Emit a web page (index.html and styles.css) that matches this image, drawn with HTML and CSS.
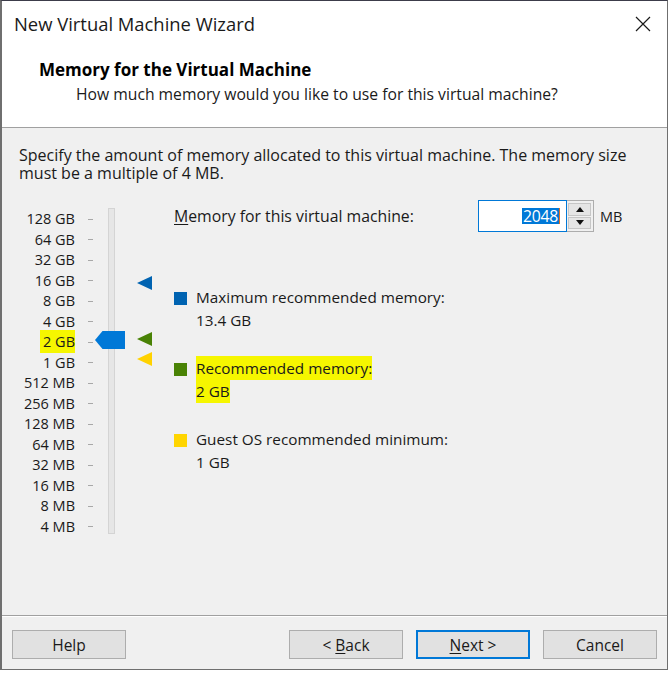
FILE: index.html
```html
<!DOCTYPE html>
<html>
<head>
<meta charset="utf-8">
<link rel="stylesheet" href="styles.css">
</head>
<body>
<div class="window">
  <div class="titlebar">
    <span class="title">New Virtual Machine Wizard</span>
    <svg class="close" width="16" height="16" viewBox="0 0 16 16"><path d="M1 1 L15 15 M15 1 L1 15" stroke="#1a1a1a" stroke-width="1.2" fill="none"/></svg>
  </div>
  <div class="header">
    <div class="h-title">Memory for the Virtual Machine</div>
    <div class="h-sub">How much memory would you like to use for this virtual machine?</div>
  </div>
  <div class="body">
    <p class="intro">Specify the amount of memory allocated to this virtual machine. The memory size must be a multiple of 4 MB.</p>
    <div class="main">
      <div class="scale">
        <div class="labels">
          <div class="row"><span class="lbl">128 GB</span><span class="tick"></span></div>
          <div class="row"><span class="lbl">64 GB</span><span class="tick"></span></div>
          <div class="row"><span class="lbl">32 GB</span><span class="tick"></span></div>
          <div class="row"><span class="lbl">16 GB</span><span class="tick"></span></div>
          <div class="row"><span class="lbl">8 GB</span><span class="tick"></span></div>
          <div class="row"><span class="lbl">4 GB</span><span class="tick"></span></div>
          <div class="row"><span class="lbl"><span class="hl-label">2 GB</span></span><span class="tick"></span></div>
          <div class="row"><span class="lbl">1 GB</span><span class="tick"></span></div>
          <div class="row"><span class="lbl">512 MB</span><span class="tick"></span></div>
          <div class="row"><span class="lbl">256 MB</span><span class="tick"></span></div>
          <div class="row"><span class="lbl">128 MB</span><span class="tick"></span></div>
          <div class="row"><span class="lbl">64 MB</span><span class="tick"></span></div>
          <div class="row"><span class="lbl">32 MB</span><span class="tick"></span></div>
          <div class="row"><span class="lbl">16 MB</span><span class="tick"></span></div>
          <div class="row"><span class="lbl">8 MB</span><span class="tick"></span></div>
          <div class="row"><span class="lbl">4 MB</span><span class="tick"></span></div>
        </div>
        <div class="track"></div>
        <div class="thumb"></div>
        <div class="tri tri-max"></div>
        <div class="tri tri-rec"></div>
        <div class="tri tri-min"></div>
      </div>
      <div class="panel">
        <div class="mem-row">
          <span class="mem-label"><u>M</u>emory for this virtual machine:</span>
          <div class="input"><span class="sel">2048</span><span class="caret"></span></div>
          <div class="spin">
            <div class="spin-btn"><span class="arr-up"></span></div>
            <div class="spin-btn"><span class="arr-down"></span></div>
          </div>
          <span class="unit">MB</span>
        </div>
        <div class="legend">
          <div class="item">
            <span class="sq sq-max"></span>
            <div class="item-text"><div>Maximum recommended memory:</div><div>13.4 GB</div></div>
          </div>
          <div class="item">
            <span class="sq sq-rec"></span>
            <div class="item-text"><div><span class="hl">Recommended memory:</span></div><div><span class="hl">2 GB</span></div></div>
          </div>
          <div class="item">
            <span class="sq sq-min"></span>
            <div class="item-text"><div>Guest OS recommended minimum:</div><div>1 GB</div></div>
          </div>
        </div>
      </div>
    </div>
  </div>
  <div class="footer">
    <button class="btn">Help</button>
    <span class="spacer"></span>
    <button class="btn">&lt; <u>B</u>ack</button>
    <button class="btn btn-default"><u>N</u>ext &gt;</button>
    <button class="btn">Cancel</button>
  </div>
</div>
</body>
</html>
```

FILE: styles.css
```css
* { box-sizing: border-box; }
html, body { margin: 0; padding: 0; background: #ffffff; }
body { font-family: "Open Sans", "Noto Sans", sans-serif; font-size: 15.8px; color: #1a1a1a; }

.window {
  width: 668px;
  border: 1px solid #6f6f6f;
  border-left: 2px solid #6f6f6f;
  border-top: 1px solid #3c3c4a;
  background: #ffffff;
}

.titlebar {
  height: 47px;
  display: flex;
  align-items: center;
  justify-content: space-between;
  padding: 0 16px 0 12px;
}
.title { font-size: 18.4px; color: #1a1a1a; margin-top: -2px; }
.close { display: block; margin-top: -2px; }

.header {
  height: 80px;
  padding: 10px 0 0 37px;
  border-bottom: 1px solid #a0a0a0;
}
.h-title { font-weight: 700; font-size: 17px; line-height: 24px; color: #000; }
.h-sub { padding-left: 37px; line-height: 24px; font-size: 15.7px; }

.body {
  background: #f0f0f0;
  height: 488px;
  padding: 18px 0 0 17px;
  border-bottom: 1px solid #a0a0a0;
}
.intro { margin: 0; line-height: 18px; font-size: 16px; width: 620px; }

.main { display: flex; margin-top: 18px; }

.scale {
  position: relative;
  width: 155px;
  display: flex;
  padding-top: 9px;
}
.labels { display: flex; flex-direction: column; }
.row { height: 20.5px; display: flex; align-items: center; }
.lbl { width: 56px; text-align: right; font-size: 14.5px; line-height: 18px; }
.hl-label { background: #f6f600; padding: 2px 0 2px 3px; }
.tick { width: 5px; height: 1px; background: #a8a8a8; margin-left: 13px; }
.track {
  width: 7px;
  margin: -1px 0 0 15px;
  height: 326px;
  background: #e6e6e6;
  border: 1px solid #d4d4d4;
}
.thumb {
  position: absolute;
  left: 76px;
  top: 131px;
  width: 30px;
  height: 18px;
  background: #0078d7;
  clip-path: polygon(0 50%, 25% 0, 100% 0, 100% 100%, 25% 100%);
}
.tri {
  position: absolute;
  left: 118px;
  width: 15px;
  height: 14px;
  clip-path: polygon(0 50%, 100% 0, 100% 100%);
}
.tri-max { top: 76px; background: #0063b1; }
.tri-rec { top: 132px; background: #498205; }
.tri-min { top: 152px; background: #ffd200; }

.panel { flex: 1; }
.mem-row { display: flex; align-items: center; height: 32px; }
.mem-label { width: 304px; }
.input {
  width: 89px;
  height: 32px;
  border: 1px solid #0078d7;
  background: #fff;
  display: flex;
  align-items: center;
  justify-content: flex-end;
  padding-right: 6px;
}
.sel { background: #0078d7; color: #fff; line-height: 16px; letter-spacing: -0.3px; padding: 0 1px; }
.caret { width: 1px; height: 16px; background: #e07020; }
.spin {
  width: 27px;
  height: 32px;
  border: 1px solid #adadad;
  border-left: none;
  display: flex;
  flex-direction: column;
  padding: 2px 2px 2px 1px;
  gap: 1px;
  background: #f0f0f0;
}
.spin-btn {
  flex: 1;
  background: #e5e5e5;
  border: 1px solid #c6c6c6;
  display: flex;
  align-items: center;
  justify-content: center;
}
.arr-up { width: 0; height: 0; border-left: 4px solid transparent; border-right: 4px solid transparent; border-bottom: 5px solid #111; }
.arr-down { width: 0; height: 0; border-left: 4px solid transparent; border-right: 4px solid transparent; border-top: 5px solid #111; }
.unit { margin-left: 6px; font-size: 14.5px; }

.legend { margin-top: 54px; display: flex; flex-direction: column; gap: 25px; font-size: 15.3px; }
.item { display: flex; align-items: flex-start; }
.sq { width: 13px; height: 13px; margin: 6px 9px 0 0; flex: none; }
.sq-max { background: #0063b1; }
.sq-rec { background: #498205; }
.sq-min { background: #ffd500; }
.item-text { line-height: 23px; }
.hl { background: #f6f600; padding: 2px 0; }

.footer {
  border-top: 1px solid #ffffff;
  background: #f0f0f0;
  height: 53px;
  display: flex;
  align-items: flex-start;
  padding: 13px 10px 0 10px;
  gap: 13px;
}
.spacer { flex: 1; }
.btn {
  width: 114px;
  height: 29px;
  font-family: "Open Sans", "Noto Sans", sans-serif;
  font-size: 15.5px;
  color: #1a1a1a;
  background: #e1e1e1;
  border: 1px solid #adadad;
  padding: 0;
}
.btn-default { border: 2px solid #0078d7; }
u { text-decoration-thickness: 1px; text-underline-offset: 2px; }
```
